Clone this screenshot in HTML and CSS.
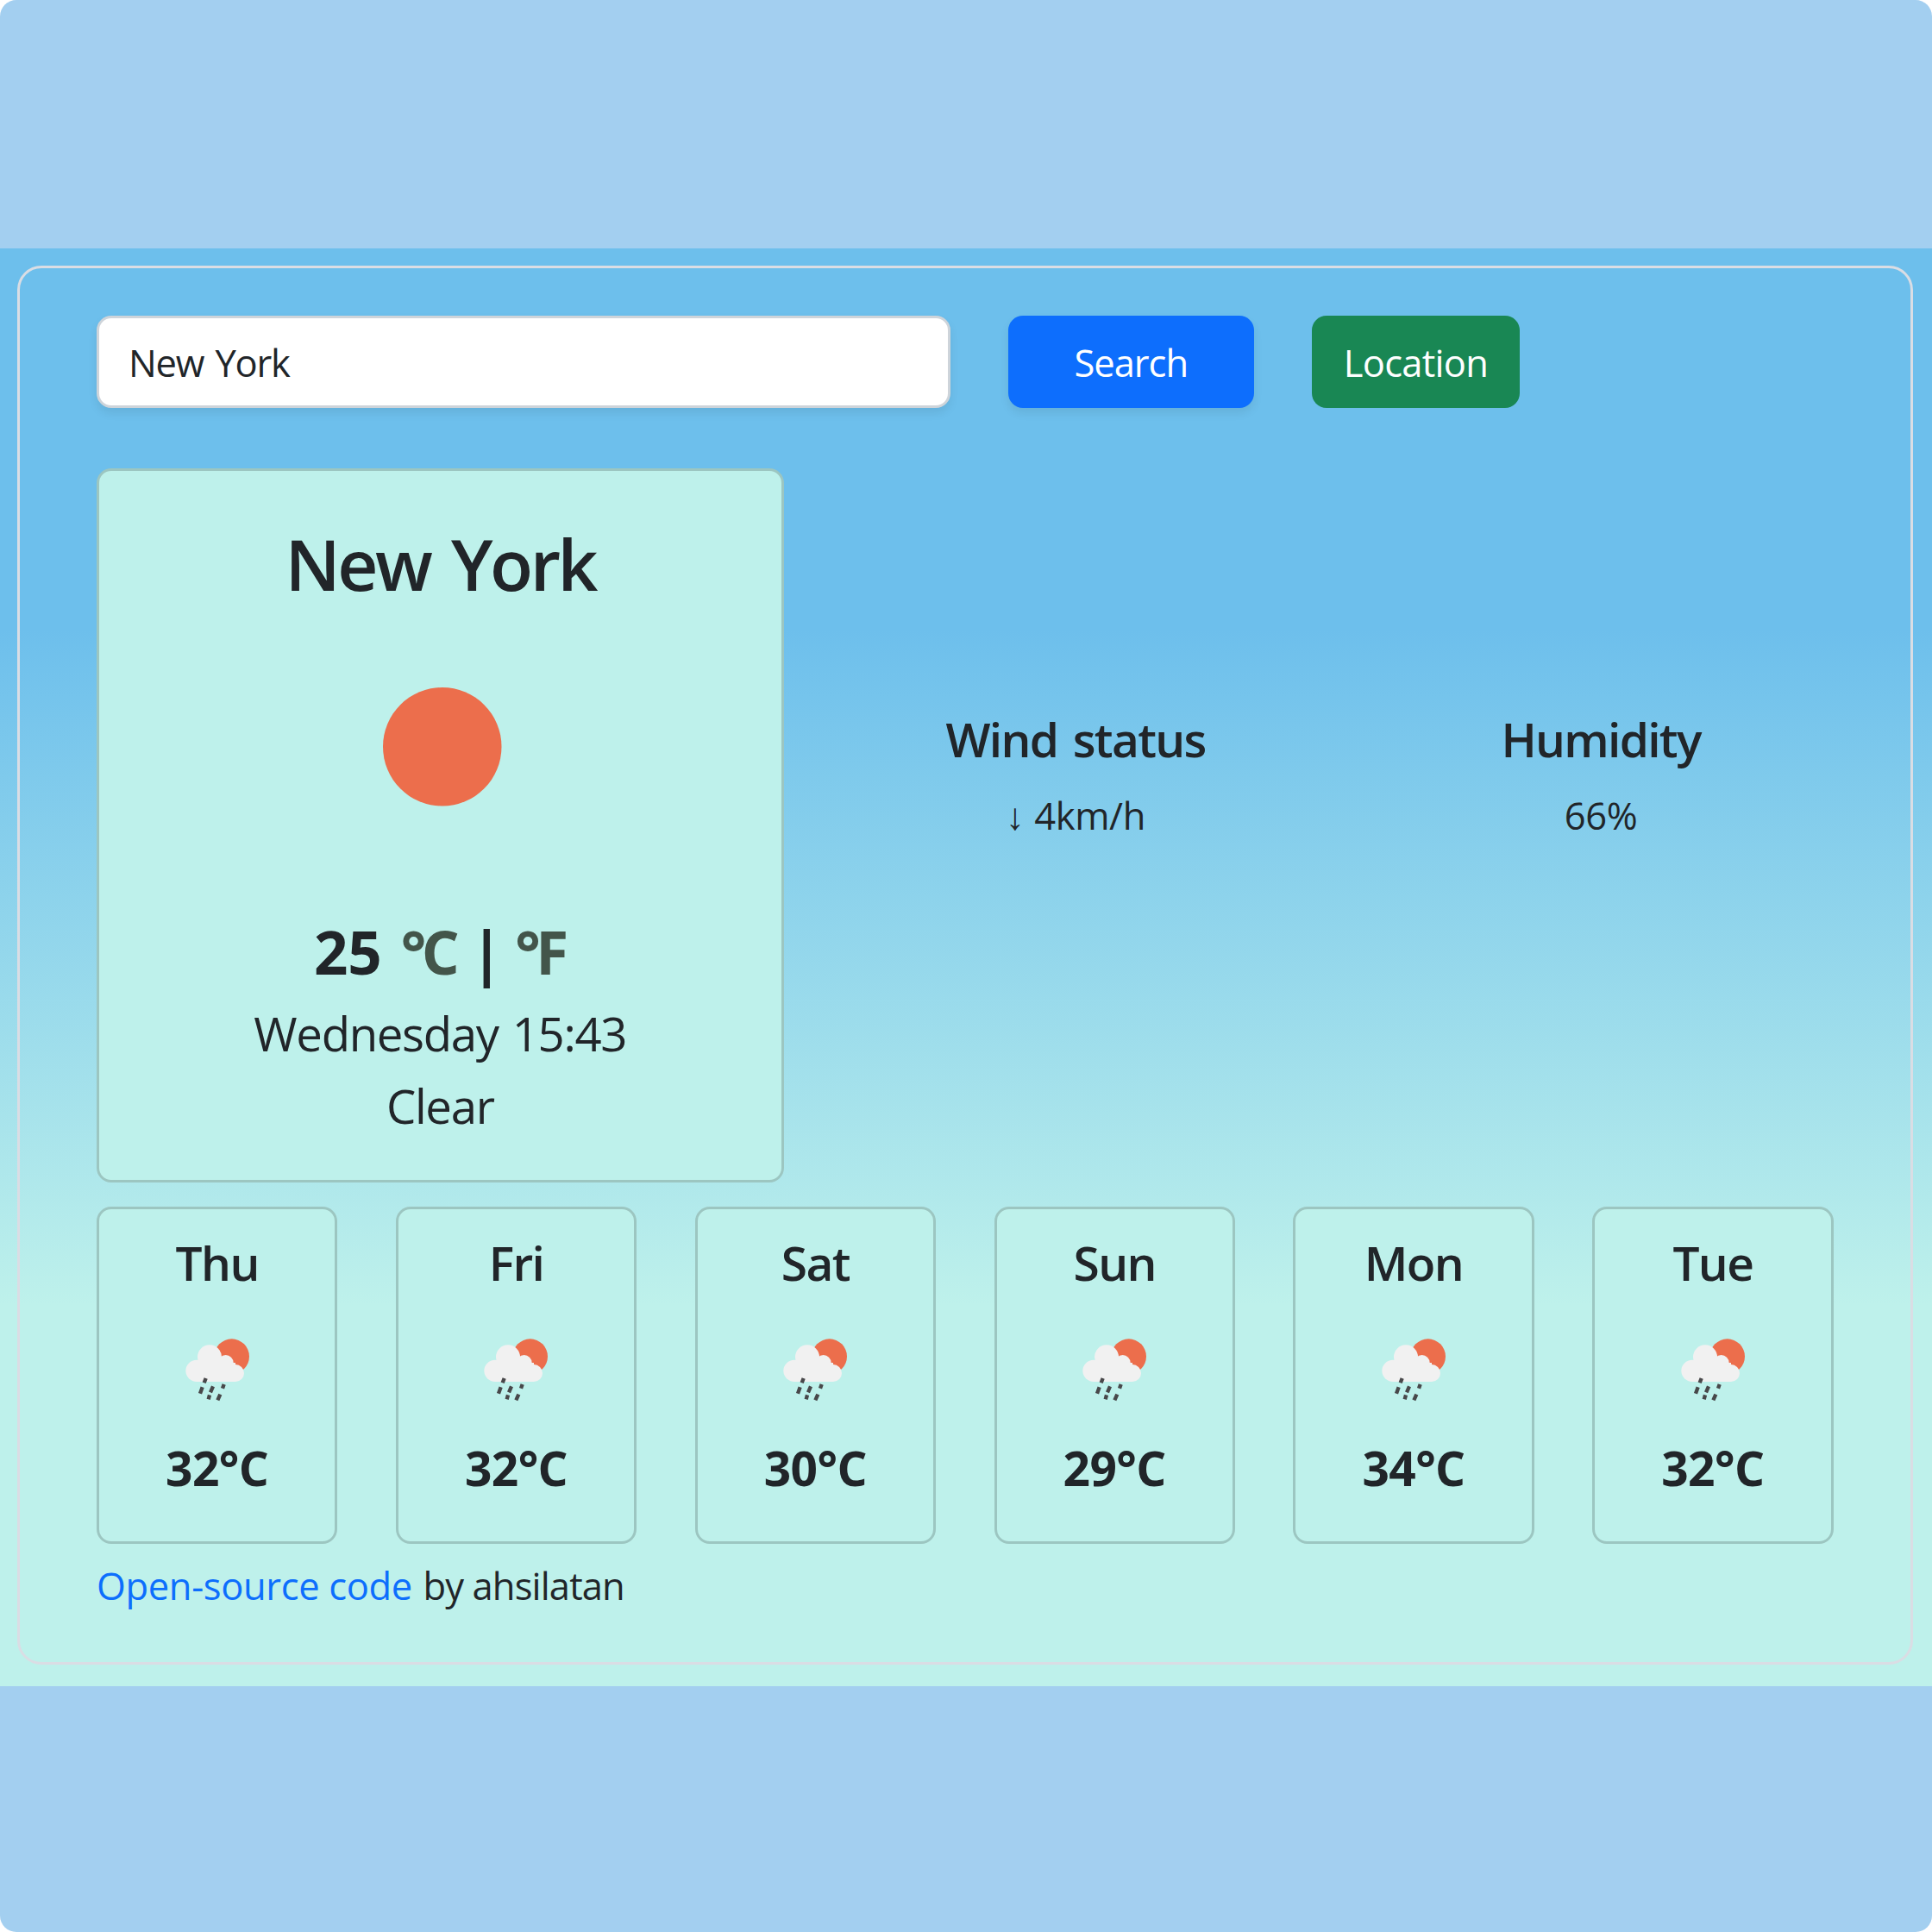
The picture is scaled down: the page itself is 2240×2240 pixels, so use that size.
FILE: index.html
```html
<!DOCTYPE html>
<html lang="en">
<head>
<meta charset="utf-8">
<title>Weather</title>
<link rel="stylesheet" href="styles.css">
</head>
<body>
<svg class="defs" width="0" height="0" aria-hidden="true">
  <defs>
    <clipPath id="sun-edge"><rect x="150" y="20" width="144" height="140"/></clipPath>
    <symbol id="rain" viewBox="6 0 360 300">
      <circle cx="236" cy="98" r="61" fill="#ec6e4c" clip-path="url(#sun-edge)"/>
      <g fill="#f1f1f1">
        <circle cx="114" cy="148" r="38"/>
        <circle cx="159" cy="100" r="42"/>
        <circle cx="215" cy="120" r="27"/>
        <circle cx="249" cy="156" r="30"/>
        <rect x="114" y="120" width="135" height="66"/>
      </g>
      <path d="M146 174l-6 16M134 205l-8 22M171 202l-9 21M209 195l-5 14M159 232l-4 15M196 230l-9 20" stroke="#48484a" stroke-width="13" fill="none"/>
    </symbol>
  </defs>
</svg>
<div class="page">
  <div class="weather">
    <main class="frame">
      <form class="search">
        <input class="city-input" type="text" value="New York">
        <button class="btn btn-search" type="button">Search</button>
        <button class="btn btn-location" type="button">Location</button>
      </form>
      <section class="current">
        <div class="card today">
          <h1 class="city">New York</h1>
          <div class="today-icon"><svg class="sun" viewBox="0 0 100 100"><circle cx="50" cy="50" r="50" fill="#ec6e4c"/></svg></div>
          <div class="temp">25 <a class="unit celsius">°C</a> | <a class="unit fahrenheit">°F</a></div>
          <div class="when">Wednesday 15:43</div>
          <div class="when">Clear</div>
        </div>
        <div class="stat"><h2 class="stat-title">Wind status</h2><div class="stat-value"><span class="arrow">↓</span> 4km/h</div></div>
        <div class="stat"><h2 class="stat-title">Humidity</h2><div class="stat-value">66%</div></div>
      </section>
      <section class="forecast">
        <div class="card day"><h2 class="day-name">Thu</h2><svg class="day-icon"><use href="#rain"/></svg><div class="day-temp">32°C</div></div>
        <div class="card day"><h2 class="day-name">Fri</h2><svg class="day-icon"><use href="#rain"/></svg><div class="day-temp">32°C</div></div>
        <div class="card day"><h2 class="day-name">Sat</h2><svg class="day-icon"><use href="#rain"/></svg><div class="day-temp">30°C</div></div>
        <div class="card day"><h2 class="day-name">Sun</h2><svg class="day-icon"><use href="#rain"/></svg><div class="day-temp">29°C</div></div>
        <div class="card day"><h2 class="day-name">Mon</h2><svg class="day-icon"><use href="#rain"/></svg><div class="day-temp">34°C</div></div>
        <div class="card day"><h2 class="day-name">Tue</h2><svg class="day-icon"><use href="#rain"/></svg><div class="day-temp">32°C</div></div>
      </section>
      <footer class="credit"><a class="link">Open-source code</a> <span class="author">by ahsilatan</span></footer>
    </main>
  </div>
</div>
</body>
</html>
```
FILE: styles.css
```css
* { box-sizing: border-box; }
html { background: #fff; }
body {
  margin: 0;
  font-family: "Open Sans", "Noto Sans", sans-serif;
  font-size: 43.5px;
  color: #212529;
}
h1, h2 { margin: 0; font-weight: 600; }
.defs { display: none; }
.page {
  width: 2240px;
  height: 2240px;
  padding-top: 288px;
  border-radius: 19px;
  background: #a3cff0;
}
.weather {
  height: 1667px;
  padding: 20px 22px 25px 20px;
  background: linear-gradient(#6dbfec 26.5%, #bef1eb 73.5%);
}
.frame {
  height: 1622px;
  padding: 55px 89.5px 0 89px;
  border: 3px solid #dadde4;
  border-radius: 28px;
}
.search { display: flex; gap: 67px; height: 107px; }
.city-input {
  width: 989.5px;
  padding: 2px 34px 0;
  border: 3px solid #ced4da;
  border-radius: 17px;
  background: #fff;
  box-shadow: 0 6px 11px rgba(0, 0, 0, .075);
  color: inherit;
  font: inherit;
  letter-spacing: -1.2px;
  word-spacing: 3px;
}
.btn {
  padding: 2px 0 0;
  border: 0;
  border-radius: 17px;
  color: #fff;
  font: inherit;
}
.btn-search {
  width: 285.5px;
  background: #0d6efd;
  box-shadow: 0 6px 11px rgba(0, 0, 0, .075);
  letter-spacing: -1px;
}
.btn-location { width: 241px; background: #198754; letter-spacing: -.7px; }
.card {
  border: 3px solid rgba(0, 0, 0, .176);
  border-radius: 17px;
  background: #bef1eb;
  text-align: center;
}
.current { display: flex; height: 828px; margin: 69.5px -35px 0 0; }
.today { width: 796.5px; margin-right: 34px; padding-top: 57.5px; }
.city {
  font-size: 82px;
  line-height: 101px;
  letter-spacing: -3.5px;
  word-spacing: 7px;
}
.today-icon {
  display: flex;
  justify-content: center;
  height: 357px;
  padding: 93px 0 0 5px;
}
.sun { width: 137.5px; height: 137.5px; }
.temp { font-size: 69px; font-weight: 700; line-height: 84px; margin: 0 3px 11px 0; }
.unit { color: #43554a; letter-spacing: -5.5px; }
.celsius { margin-left: 4px; }
.fahrenheit { margin-left: -4px; }
.when {
  font-size: 54.5px;
  line-height: 84px;
  letter-spacing: -1.3px;
  word-spacing: 3px;
}
.stat { flex: 1; padding-top: 280.5px; text-align: center; }
.stat-title {
  margin-bottom: 21.5px;
  font-size: 55px;
  line-height: 67.6px;
  letter-spacing: -1.7px;
  word-spacing: 5px;
}
.stat-value { line-height: 67.6px; letter-spacing: -.4px; }
.arrow { font-family: "Liberation Sans", sans-serif; margin-right: 1px; }
.forecast {
  display: grid;
  grid-template-columns: repeat(6, 1fr);
  gap: 67.5px;
  margin-top: 28px;
}
.day {
  display: flex;
  flex-direction: column;
  align-items: center;
  height: 391.5px;
  padding-top: 28.5px;
}
.day-name { font-size: 55px; line-height: 67px; letter-spacing: -1.6px; }
.day-icon { width: 120px; height: 100px; margin: 43px 0 28px; }
.day-temp { font-size: 55px; font-weight: 700; line-height: 67px; letter-spacing: -.6px; }
.credit { margin-top: 14.5px; line-height: 67px; letter-spacing: -.35px; }
.link { color: #0d6efd; }
.author { letter-spacing: -.85px; margin-left: 1.5px; }
```
